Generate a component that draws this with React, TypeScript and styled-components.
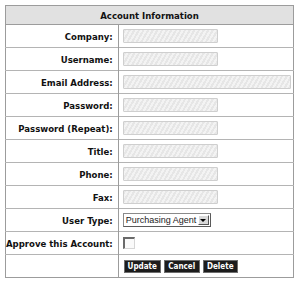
import React from 'react';
import styled, { createGlobalStyle } from 'styled-components';

const GlobalStyle = createGlobalStyle`
  html, body {
    margin: 0;
    padding: 0;
    background: #fff;
  }
  body {
    font-family: "DejaVu Sans", Verdana, sans-serif;
  }
`;

const Page = styled.div`
  padding: 5px 0 0 5px;
  width: 300px;
  height: 287px;
  box-sizing: border-box;
`;

const FormTable = styled.table`
  width: 289px;
  border-collapse: collapse;
  border: 1px solid #9c9c9c;
  color: #111;
  font-family: "DejaVu Sans Condensed", "DejaVu Sans", Verdana, sans-serif;
  font-stretch: condensed;
`;

const HeaderCell = styled.th`
  height: 18px;
  padding: 0;
  background: #e1e1e1;
  border-bottom: 1px solid #9c9c9c;
  font-size: 9.5px;
  font-weight: bold;
  text-align: center;
`;

const Row = styled.tr`
  height: 23px;
  border-top: 1px solid #b4b4b4;
`;

const LabelCell = styled.td`
  width: 106px;
  padding: 0 5px 0 0;
  border-right: 1px solid #9c9c9c;
  font-size: 9.5px;
  font-weight: bold;
  text-align: right;
  white-space: nowrap;
`;

const FieldCell = styled.td`
  padding: 0 0 0 4px;
  vertical-align: middle;
`;

const TextField = styled.div<{ $wide?: boolean }>`
  width: ${p => (p.$wide ? 168 : 95)}px;
  height: 14px;
  box-sizing: border-box;
  border: 1px solid #cfcfcf;
  border-radius: 1px;
  background: repeating-linear-gradient(
    120deg,
    #e6e6e6 0px,
    #e6e6e6 2px,
    #f3f3f3 2px,
    #f3f3f3 4px
  );
`;

const Select = styled.div`
  display: flex;
  align-items: center;
  width: 88px;
  height: 14px;
  box-sizing: border-box;
  border: 1px solid #5a5a5a;
  border-top-color: #8a8a8a;
  border-left-color: #8a8a8a;
  font-family: "Liberation Sans", Arial, sans-serif;
  font-stretch: normal;
  font-size: 9px;
  color: #222;
  background: #fff;
`;

const SelectText = styled.span`
  flex: 1;
  padding-left: 2px;
  white-space: nowrap;
`;

const SelectArrow = styled.span`
  width: 11px;
  height: 10px;
  margin-right: 1px;
  display: flex;
  align-items: center;
  justify-content: center;
  background: #d8d8d8;
  border: 1px solid #fff;
  border-right-color: #555;
  border-bottom-color: #555;
  box-sizing: border-box;
  &::after {
    content: '';
    border-left: 3px solid transparent;
    border-right: 3px solid transparent;
    border-top: 3px solid #000;
  }
`;

const Checkbox = styled.span`
  display: block;
  width: 12px;
  height: 12px;
  box-sizing: border-box;
  border: 1px solid #d6d6d6;
  border-top: 2px solid #6a6a6a;
  border-left: 2px solid #6a6a6a;
  background: #fafafa;
`;

const ButtonRow = styled.div`
  display: flex;
  gap: 3px;
  padding-left: 1px;
`;

const ActionButton = styled.button<{ $w: number }>`
  width: ${p => p.$w}px;
  height: 13px;
  padding: 0;
  background: #1c1c1c;
  border: 1px solid #6e6e6e;
  color: #fff;
  font-family: "DejaVu Sans Condensed", "DejaVu Sans", Verdana, sans-serif;
  font-stretch: condensed;
  font-size: 8px;
  font-weight: bold;
  line-height: 11px;
`;

const fields: { label: string; wide?: boolean }[] = [
  { label: 'Company:' },
  { label: 'Username:' },
  { label: 'Email Address:', wide: true },
  { label: 'Password:' },
  { label: 'Password (Repeat):' },
  { label: 'Title:' },
  { label: 'Phone:' },
  { label: 'Fax:' },
];

export default function App() {
  return (
    <Page>
      <GlobalStyle />
      <FormTable>
        <thead>
          <tr>
            <HeaderCell colSpan={2}>Account Information</HeaderCell>
          </tr>
        </thead>
        <tbody>
          {fields.map(f => (
            <Row key={f.label}>
              <LabelCell>{f.label}</LabelCell>
              <FieldCell>
                <TextField $wide={f.wide} />
              </FieldCell>
            </Row>
          ))}
          <Row>
            <LabelCell>User Type:</LabelCell>
            <FieldCell>
              <Select>
                <SelectText>Purchasing Agent</SelectText>
                <SelectArrow />
              </Select>
            </FieldCell>
          </Row>
          <Row>
            <LabelCell>Approve this Account:</LabelCell>
            <FieldCell>
              <Checkbox />
            </FieldCell>
          </Row>
          <Row>
            <LabelCell />
            <FieldCell>
              <ButtonRow>
                <ActionButton $w={37}>Update</ActionButton>
                <ActionButton $w={36}>Cancel</ActionButton>
                <ActionButton $w={35}>Delete</ActionButton>
              </ButtonRow>
            </FieldCell>
          </Row>
        </tbody>
      </FormTable>
    </Page>
  );
}
